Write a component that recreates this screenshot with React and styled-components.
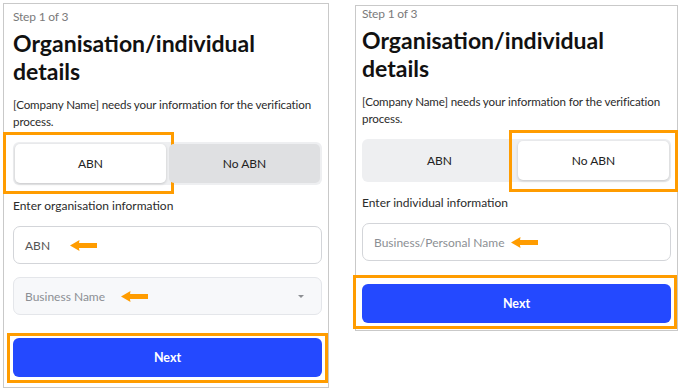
import styled, { createGlobalStyle } from "styled-components";

const GlobalStyle = createGlobalStyle`
  html, body {
    margin: 0;
    padding: 0;
    background: #fff;
  }
  body {
    font-family: "Lato", "Noto Sans", sans-serif;
    color: #222;
  }
  * {
    box-sizing: border-box;
  }
`;

const Page = styled.div`
  display: flex;
  align-items: flex-start;
  gap: 26px;
  padding: 3px 0 0 3px;
`;

const Panel = styled.div`
  width: ${(p) => p.$width}px;
  margin-top: ${(p) => p.$offset}px;
  border: 1px solid #c9c9c9;
  padding: ${(p) => p.$padTop}px 6px ${(p) => p.$padBottom}px ${(p) => p.$padLeft}px;
  display: flex;
  flex-direction: column;
  background: #fff;
`;

const Step = styled.div`
  font-size: 12px;
  line-height: 16px;
  letter-spacing: -0.2px;
  color: #7a7a7a;
`;

const Heading = styled.h1`
  margin: 4px 0 0;
  font-size: 23px;
  line-height: 28px;
  font-weight: 700;
  color: #111;
`;

const Description = styled.p`
  margin: 11px 0 0;
  font-size: 11.6px;
  line-height: 17px;
  letter-spacing: -0.12px;
  color: #2b2b2b;
`;

const Segmented = styled.div`
  margin-top: 12px;
  height: 43px;
  display: flex;
  gap: 3px;
  padding: 2px;
  border-radius: 6px;
  background: #eeeff1;
`;

const Segment = styled.div`
  position: relative;
  flex: 1;
  display: flex;
  align-items: center;
  justify-content: center;
  border-radius: 5px;
  font-size: 12px;
  color: #222;
  background: ${(p) => (p.$active ? "#fff" : p.$hover ? "#dfe0e2" : "transparent")};
  box-shadow: ${(p) => (p.$active ? "0 1px 3px rgba(0,0,0,0.18)" : "none")};
`;

const Highlight = styled.span`
  position: absolute;
  top: ${(p) => p.$t}px;
  right: ${(p) => p.$r}px;
  bottom: ${(p) => p.$b}px;
  left: ${(p) => p.$l}px;
  border: 3px solid #ff9c00;
  pointer-events: none;
`;

const Label = styled.div`
  margin-top: 13px;
  font-size: 12px;
  line-height: 16px;
  color: #2b2b2b;
`;

const Field = styled.div`
  margin-top: ${(p) => p.$gap}px;
  height: 38px;
  display: flex;
  align-items: center;
  padding: 0 17px 0 11px;
  border-radius: 7px;
  border: 1px solid ${(p) => (p.$disabled ? "#e4e6ea" : "#d3d5d9")};
  background: ${(p) => (p.$disabled ? "#f7f8fa" : "#fff")};
  font-size: 12px;
  color: ${(p) => (p.$placeholder ? "#8c8f94" : "#555")};
`;

const Caret = styled.span`
  margin-left: auto;
  width: 0;
  height: 0;
  border-left: 3px solid transparent;
  border-right: 3px solid transparent;
  border-top: 3px solid #8d8f93;
`;

const Arrow = styled.svg`
  margin-left: ${(p) => p.$gap}px;
  flex-shrink: 0;
`;

const NextButton = styled.button`
  position: relative;
  margin-top: 23px;
  height: 39px;
  width: 100%;
  border: none;
  border-radius: 6px;
  background: #2449ff;
  color: #fff;
  font-family: inherit;
  font-size: 12.5px;
  font-weight: 700;
`;

function PointerArrow({ gap }) {
  return (
    <Arrow $gap={gap} width="27" height="11" viewBox="0 0 27 11">
      <path d="M0 5.5 L9.5 0 Q7.8 5.5 9.5 11 Z" fill="#ff9c00" />
      <rect x="8" y="3" width="19" height="5" fill="#ff9c00" />
    </Arrow>
  );
}

function Intro() {
  return (
    <>
      <Step>Step 1 of 3</Step>
      <Heading>
        Organisation/individual
        <br />
        details
      </Heading>
      <Description>
        [Company Name] needs your information for the verification process.
      </Description>
    </>
  );
}

export default function App() {
  return (
    <>
      <GlobalStyle />
      <Page>
        <Panel $width={326} $offset={0} $padTop={5} $padBottom={10} $padLeft={9}>
          <Intro />
          <Segmented>
            <Segment $active>
              ABN
              <Highlight $t={-12} $r={-8} $b={-11} $l={-12} />
            </Segment>
            <Segment $hover>No ABN</Segment>
          </Segmented>
          <Label>Enter organisation information</Label>
          <Field $gap={12}>
            ABN
            <PointerArrow gap={20} />
          </Field>
          <Field $gap={13} $disabled $placeholder>
            Business Name
            <PointerArrow gap={16} />
            <Caret />
          </Field>
          <NextButton>
            Next
            <Highlight $t={-5} $r={-6} $b={-6} $l={-6} />
          </NextButton>
        </Panel>
        <Panel $width={323} $offset={2} $padTop={0} $padBottom={7} $padLeft={6}>
          <Intro />
          <Segmented>
            <Segment>ABN</Segment>
            <Segment $active>
              No ABN
              <Highlight $t={-11} $r={-9} $b={-12} $l={-9} />
            </Segment>
          </Segmented>
          <Label>Enter individual information</Label>
          <Field $gap={12} $placeholder>
            Business/Personal Name
            <PointerArrow gap={6} />
          </Field>
          <NextButton>
            Next
            <Highlight $t={-9} $r={-6} $b={-6} $l={-9} />
          </NextButton>
        </Panel>
      </Page>
    </>
  );
}
